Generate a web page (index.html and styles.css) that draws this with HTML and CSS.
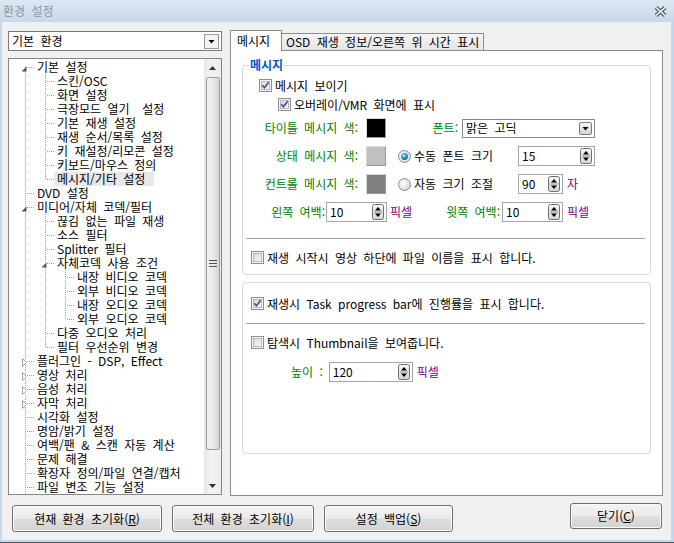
FILE: index.html
```html
<!DOCTYPE html>
<html lang="ko">

<head>
    <meta charset="UTF-8">
    <title>환경 설정</title>
    <link rel="stylesheet" href="styles.css">
</head>

<body>
    <svg class="defs" width="0" height="0">
        <defs>
            <linearGradient id="cbg" x1="0" y1="0" x2="1" y2="1">
                <stop offset="0" stop-color="#d6d8db" />
                <stop offset="1" stop-color="#fbfbfb" />
            </linearGradient>
            <radialGradient id="rbg" cx="0.4" cy="0.4" r="0.7">
                <stop offset="0" stop-color="#ffffff" />
                <stop offset="1" stop-color="#d2d2d2" />
            </radialGradient>
            <radialGradient id="rdot" cx="0.4" cy="0.35" r="0.7">
                <stop offset="0" stop-color="#c4ecff" />
                <stop offset="0.45" stop-color="#3aa0dc" />
                <stop offset="1" stop-color="#154f86" />
            </radialGradient>
            <linearGradient id="btng" x1="0" y1="0" x2="0" y2="1">
                <stop offset="0" stop-color="#f6f6f6" />
                <stop offset="1" stop-color="#d4d4d4" />
            </linearGradient>
        </defs>
    </svg>

    <div class="window">
        <div class="titlebar">
            <span class="title">환경 설정</span>
            <svg class="close" width="13" height="11" viewBox="0 0 13 11">
                <path d="M2 1.5l9 8M11 1.5l-9 8" stroke="#525c68" stroke-width="4" />
                <path d="M2 1.5l9 8M11 1.5l-9 8" stroke="#f6f7f9" stroke-width="1.6" />
            </svg>
        </div>

        <div class="client">
            <div class="main">
                <!-- 왼쪽: 분류 선택 + 트리 -->
                <div class="side">
                    <div class="combo main-combo">
                        <span class="combo-text">기본 환경</span>
                        <svg class="drop" width="15" height="15" viewBox="0 0 15 15">
                            <rect x=".5" y=".5" width="14" height="14" fill="#f4f4f4" stroke="#9a9a9a" />
                            <path d="M4.5 6h6l-3 3.5z" fill="#000" />
                        </svg>
                    </div>

                    <div class="treebox">
                        <ul class="tree">
                            <li>
                                <div class="row"><svg class="exp" viewBox="0 0 7 14"><path d="M5.5 6.5v5h-5z" fill="#555" /></svg><span>기본 설정</span></div>
                                <ul>
                                    <li><div class="row"><span>스킨/OSC</span></div></li>
                                    <li><div class="row"><span>화면 설정</span></div></li>
                                    <li><div class="row"><span>극장모드 열기&nbsp; 설정</span></div></li>
                                    <li><div class="row"><span>기본 재생 설정</span></div></li>
                                    <li><div class="row"><span>재생 순서/목록 설정</span></div></li>
                                    <li><div class="row"><span>키 재설정/리모콘 설정</span></div></li>
                                    <li><div class="row"><span>키보드/마우스 정의</span></div></li>
                                    <li><div class="row"><span class="sel">메시지/기타 설정</span></div></li>
                                </ul>
                            </li>
                            <li><div class="row"><span>DVD 설정</span></div></li>
                            <li>
                                <div class="row"><svg class="exp" viewBox="0 0 7 14"><path d="M5.5 6.5v5h-5z" fill="#555" /></svg><span>미디어/자체 코덱/필터</span></div>
                                <ul>
                                    <li><div class="row"><span>끊김 없는 파일 재생</span></div></li>
                                    <li><div class="row"><span>소스 필터</span></div></li>
                                    <li><div class="row"><span>Splitter 필터</span></div></li>
                                    <li>
                                        <div class="row"><svg class="exp" viewBox="0 0 7 14"><path d="M5.5 6.5v5h-5z" fill="#555" /></svg><span>자체코덱 사용 조건</span></div>
                                        <ul>
                                            <li><div class="row"><span>내장 비디오 코덱</span></div></li>
                                            <li><div class="row"><span>외부 비디오 코덱</span></div></li>
                                            <li><div class="row"><span>내장 오디오 코덱</span></div></li>
                                            <li><div class="row"><span>외부 오디오 코덱</span></div></li>
                                        </ul>
                                    </li>
                                    <li><div class="row"><span>다중 오디오 처리</span></div></li>
                                    <li><div class="row"><span>필터 우선순위 변경</span></div></li>
                                </ul>
                            </li>
                            <li><div class="row"><svg class="exp" viewBox="0 0 7 14"><path d="M1.5 4.5v8l4-4z" fill="#fff" stroke="#a6a6a6" /></svg><span>플러그인 - DSP, Effect</span></div></li>
                            <li><div class="row"><svg class="exp" viewBox="0 0 7 14"><path d="M1.5 4.5v8l4-4z" fill="#fff" stroke="#a6a6a6" /></svg><span>영상 처리</span></div></li>
                            <li><div class="row"><svg class="exp" viewBox="0 0 7 14"><path d="M1.5 4.5v8l4-4z" fill="#fff" stroke="#a6a6a6" /></svg><span>음성 처리</span></div></li>
                            <li><div class="row"><svg class="exp" viewBox="0 0 7 14"><path d="M1.5 4.5v8l4-4z" fill="#fff" stroke="#a6a6a6" /></svg><span>자막 처리</span></div></li>
                            <li><div class="row"><span>시각화 설정</span></div></li>
                            <li><div class="row"><span>명암/밝기 설정</span></div></li>
                            <li><div class="row"><span>여백/팬 &amp; 스캔 자동 계산</span></div></li>
                            <li><div class="row"><span>문제 해결</span></div></li>
                            <li><div class="row"><span>확장자 정의/파일 연결/캡처</span></div></li>
                            <li><div class="row"><span>파일 변조 기능 설정</span></div></li>
                        </ul>

                        <div class="vscroll">
                            <div class="sb-arrow">
                                <svg width="7" height="4" viewBox="0 0 7 4"><path d="M0 4h7L3.5 0z" fill="#333" /></svg>
                            </div>
                            <div class="sb-thumb">
                                <svg width="8" height="7" viewBox="0 0 8 7">
                                    <path d="M0 .5h8M0 3.5h8M0 6.5h8" stroke="#505050" />
                                </svg>
                            </div>
                            <div class="sb-track"></div>
                            <div class="sb-arrow">
                                <svg width="7" height="4" viewBox="0 0 7 4"><path d="M0 0h7L3.5 4z" fill="#333" /></svg>
                            </div>
                        </div>
                    </div>
                </div>

                <!-- 오른쪽: 탭 -->
                <div class="tabs">
                    <div class="tabbar">
                        <div class="tab active">메시지</div>
                        <div class="tab">OSD 재생 정보/오른쪽 위 시간 표시</div>
                        <div class="tab-fill"></div>
                    </div>

                    <div class="pane">
                        <div class="group first">
                            <div class="legend">메시지</div>

                            <div class="line check-show">
                                <svg class="cb" width="13" height="13" viewBox="0 0 13 13"><rect x=".5" y=".5" width="12" height="12" fill="#f4f4f4" stroke="#8e8f8f" /><rect x="2.5" y="2.5" width="8" height="8" fill="url(#cbg)" stroke="#b4b8bd" /><path d="M3.3 6.3l2.2 2.4 4.2-5.4" fill="none" stroke="#3e5486" stroke-width="1.7" /></svg>
                                <span class="cb-text">메시지 보이기</span>
                            </div>

                            <div class="line check-overlay">
                                <svg class="cb" width="13" height="13" viewBox="0 0 13 13"><rect x=".5" y=".5" width="12" height="12" fill="#f4f4f4" stroke="#8e8f8f" /><rect x="2.5" y="2.5" width="8" height="8" fill="url(#cbg)" stroke="#b4b8bd" /><path d="M3.3 6.3l2.2 2.4 4.2-5.4" fill="none" stroke="#3e5486" stroke-width="1.7" /></svg>
                                <span class="cb-text">오버레이/VMR 화면에 표시</span>
                            </div>

                            <div class="line color-row">
                                <span class="lbl green">타이틀 메시지 색:</span>
                                <span class="swatch black"></span>
                                <span class="font-lbl green">폰트:</span>
                                <div class="combo font-combo">
                                    <span class="combo-text">맑은 고딕</span>
                                    <svg class="drop" width="13" height="13" viewBox="0 0 13 13">
                                        <rect x=".5" y=".5" width="12" height="12" rx="1.5" fill="url(#btng)" stroke="#7a7a7a" />
                                        <path d="M3.5 5h6l-3 3.5z" fill="#000" />
                                    </svg>
                                </div>
                            </div>

                            <div class="line color-row">
                                <span class="lbl green">상태 메시지 색:</span>
                                <span class="swatch light"></span>
                                <svg class="radio" width="13" height="13" viewBox="0 0 13 13"><circle cx="6.5" cy="6.5" r="6" fill="url(#rbg)" stroke="#8e8f8f" /><circle cx="6.5" cy="6.5" r="3.4" fill="url(#rdot)" /></svg>
                                <span class="radio-text">수동 폰트 크기</span>
                                <div class="spin spin-wide">
                                    <span class="spin-text">15</span>
                                    <svg class="spin-btn" width="12" height="16" viewBox="0 0 12 16"><rect x=".5" y=".5" width="11" height="15" rx="2" fill="url(#btng)" stroke="#6e6e6e" /><path d="M2 8h8" stroke="#9a9a9a" /><path d="M3 6.5h6L6 3z M3 9.5h6L6 13z" fill="#000" /></svg>
                                </div>
                            </div>

                            <div class="line color-row">
                                <span class="lbl green">컨트롤 메시지 색:</span>
                                <span class="swatch dark"></span>
                                <svg class="radio" width="13" height="13" viewBox="0 0 13 13"><circle cx="6.5" cy="6.5" r="6" fill="url(#rbg)" stroke="#8e8f8f" /></svg>
                                <span class="radio-text">자동 크기 조절</span>
                                <div class="spin spin-small">
                                    <span class="spin-text">90</span>
                                    <svg class="spin-btn" width="12" height="16" viewBox="0 0 12 16"><rect x=".5" y=".5" width="11" height="15" rx="2" fill="url(#btng)" stroke="#6e6e6e" /><path d="M2 8h8" stroke="#9a9a9a" /><path d="M3 6.5h6L6 3z M3 9.5h6L6 13z" fill="#000" /></svg>
                                </div>
                                <span class="unit purple">자</span>
                            </div>

                            <div class="line margin-row">
                                <span class="lbl-left green">왼쪽 여백:</span>
                                <div class="spin spin-margin">
                                    <span class="spin-text">10</span>
                                    <svg class="spin-btn" width="12" height="16" viewBox="0 0 12 16"><rect x=".5" y=".5" width="11" height="15" rx="2" fill="url(#btng)" stroke="#6e6e6e" /><path d="M2 8h8" stroke="#9a9a9a" /><path d="M3 6.5h6L6 3z M3 9.5h6L6 13z" fill="#000" /></svg>
                                </div>
                                <span class="unit unit-mid purple">픽셀</span>
                                <span class="lbl-top green">윗쪽 여백:</span>
                                <div class="spin spin-margin spin-top">
                                    <span class="spin-text">10</span>
                                    <svg class="spin-btn" width="12" height="16" viewBox="0 0 12 16"><rect x=".5" y=".5" width="11" height="15" rx="2" fill="url(#btng)" stroke="#6e6e6e" /><path d="M2 8h8" stroke="#9a9a9a" /><path d="M3 6.5h6L6 3z M3 9.5h6L6 13z" fill="#000" /></svg>
                                </div>
                                <span class="unit purple">픽셀</span>
                            </div>

                            <div class="sep sep-1"></div>

                            <div class="line check-plain check-filename">
                                <svg class="cb" width="13" height="13" viewBox="0 0 13 13"><rect x=".5" y=".5" width="12" height="12" fill="#f4f4f4" stroke="#8e8f8f" /><rect x="2.5" y="2.5" width="8" height="8" fill="url(#cbg)" stroke="#b4b8bd" /></svg>
                                <span class="cb-text">재생 시작시 영상 하단에 파일 이름을 표시 합니다.</span>
                            </div>
                        </div>

                        <div class="group second">
                            <div class="line check-plain check-task">
                                <svg class="cb" width="13" height="13" viewBox="0 0 13 13"><rect x=".5" y=".5" width="12" height="12" fill="#f4f4f4" stroke="#8e8f8f" /><rect x="2.5" y="2.5" width="8" height="8" fill="url(#cbg)" stroke="#b4b8bd" /><path d="M3.3 6.3l2.2 2.4 4.2-5.4" fill="none" stroke="#3e5486" stroke-width="1.7" /></svg>
                                <span class="cb-text">재생시 Task progress bar에 진행률을 표시 합니다.</span>
                            </div>

                            <div class="sep sep-2"></div>

                            <div class="line check-plain check-thumb">
                                <svg class="cb" width="13" height="13" viewBox="0 0 13 13"><rect x=".5" y=".5" width="12" height="12" fill="#f4f4f4" stroke="#8e8f8f" /><rect x="2.5" y="2.5" width="8" height="8" fill="url(#cbg)" stroke="#b4b8bd" /></svg>
                                <span class="cb-text">탐색시 Thumbnail을 보여줍니다.</span>
                            </div>

                            <div class="line height-row">
                                <span class="green">높이 :</span>
                                <div class="spin spin-height">
                                    <span class="spin-text">120</span>
                                    <svg class="spin-btn" width="12" height="16" viewBox="0 0 12 16"><rect x=".5" y=".5" width="11" height="15" rx="2" fill="url(#btng)" stroke="#6e6e6e" /><path d="M2 8h8" stroke="#9a9a9a" /><path d="M3 6.5h6L6 3z M3 9.5h6L6 13z" fill="#000" /></svg>
                                </div>
                                <span class="unit purple">픽셀</span>
                            </div>
                        </div>
                    </div>
                </div>
            </div>

            <div class="buttons">
                <div class="btn b-reset">현재 환경 초기화(<u>R</u>)</div>
                <div class="btn b-all">전체 환경 초기화(<u>I</u>)</div>
                <div class="btn b-backup">설정 백업(<u>S</u>)</div>
                <div class="btn b-close">닫기(<u>C</u>)</div>
            </div>
        </div>
    </div>
</body>

</html>
```

FILE: styles.css
```css
* {
    padding: 0px;
    margin: 0px;

    box-sizing: border-box;
}

html,
body {
    width: 100%;
    height: 100%;
}

body {
    font-family: "Noto Sans CJK KR", "DejaVu Sans", sans-serif;
    font-size: 12px;
    line-height: 14px;
    color: #000;
    background-color: #fff;
    word-spacing: 3px;
}

.defs {
    display: block;
    width: 0;
    height: 0;
    overflow: hidden;
}

svg {
    display: block;
    flex: none;
}

/* 창 틀 */
.window {
    width: 674px;
    height: 543px;

    display: flex;
    flex-direction: column;

    background-color: #c6d7ea;
    border-bottom: 1px solid #4b5560;
}

.titlebar {
    height: 22px;
    flex: none;

    display: flex;
    align-items: center;
    justify-content: space-between;

    padding: 0 7px 0 3px;
    background: linear-gradient(#dce7f3, #c7d8eb);
}

.title {
    color: #8c97a3;
}

.client {
    flex: 1;
    margin: 0 3px 2px 2px;
    padding: 8px 8px 0 6px;

    display: flex;
    flex-direction: column;

    background-color: #f0f0f0;
}

.main {
    height: 466px;
    flex: none;

    display: flex;
    gap: 8px;
}

/* 왼쪽 */
.side {
    width: 214px;
    display: flex;
    flex-direction: column;
}

.combo {
    display: flex;
    align-items: center;
    background-color: #fff;
}

.combo-text {
    flex: 1;
    white-space: nowrap;
}

.main-combo {
    height: 20px;
    margin-top: 1px;
    padding: 0 2px 0 3px;
    border: 1px solid #7a7a7a;
}

.treebox {
    height: 437px;
    margin-top: 7px;

    display: flex;

    border: 1px solid #828790;
    background-color: #fff;
}

.tree,
.tree ul {
    list-style: none;
}

.tree {
    flex: 1;
    overflow: hidden;
    padding-top: 1px;

    background: repeating-linear-gradient(#a0a0a0 0 1px, transparent 1px 2px) 16px 8px / 1px 100% no-repeat;
}

.tree ul {
    margin-left: 20px;
    background: repeating-linear-gradient(#a0a0a0 0 1px, transparent 1px 2px) 16px 0 / 1px calc(100% - 7px) no-repeat;
}

.row {
    height: 14px;
    padding-left: 28px;

    display: flex;
    align-items: center;
    white-space: nowrap;

    background: repeating-linear-gradient(to right, #a0a0a0 0 1px, transparent 1px 2px) 18px 7px / 8px 1px no-repeat;
}

.exp {
    width: 7px;
    height: 14px;
    margin-left: -16px;
    margin-right: 9px;
}

.sel {
    margin-left: -3px;
    padding: 0 9px 0 3px;
    background-color: #e8e8e8;
}

.vscroll {
    width: 17px;
    flex: none;

    display: flex;
    flex-direction: column;

    background: linear-gradient(to right, #e6e6e6, #f3f3f3 40%, #ececec);
}

.sb-arrow {
    height: 17px;
    display: flex;
    align-items: center;
    justify-content: center;
}

.sb-thumb {
    height: 373px;
    margin: 1px 1px 0 2px;

    display: flex;
    align-items: center;
    justify-content: center;

    border: 1px solid #9b9b9b;
    border-radius: 2px;
    background: linear-gradient(to right, #f2f2f2, #e9e9e9 50%, #d4d4d4);
}

.sb-track {
    flex: 1;
}

/* 오른쪽 탭 */
.tabs {
    width: 433px;
    display: flex;
    flex-direction: column;
}

.tabbar {
    height: 21px;
    flex: none;

    display: flex;
    align-items: flex-end;
}

.tab {
    width: 202px;
    height: 18px;
    padding-left: 4px;

    display: flex;
    align-items: center;
    white-space: nowrap;

    border: 1px solid #898c95;
    border-left: 0;
    background: linear-gradient(#f5f5f5, #e5e5e5);
}

.tab.active {
    width: 52px;
    height: 21px;
    padding-left: 6px;

    border-left: 1px solid #898c95;
    border-bottom: 0;
    background: #fff;
}

.tab-fill {
    flex: 1;
    height: 1px;
    border-bottom: 1px solid #898c95;
}

.pane {
    flex: 1;
    padding: 14px 11px 0 11px;

    display: flex;
    flex-direction: column;

    border: 1px solid #898c95;
    border-top: 0;
    background-color: #fff;
}

.group {
    display: flex;
    flex-direction: column;

    border: 1px solid #d5dadf;
    border-radius: 4px;
}

.group.first {
    height: 210px;
}

.group.second {
    height: 172px;
    margin-top: 7px;
}

.legend {
    align-self: flex-start;
    height: 14px;
    margin: -8px 0 0 6px;
    padding: 0 1px;

    color: #0058d0;
    font-weight: bold;
    background-color: #fff;
}

.line {
    display: flex;
    align-items: center;
    white-space: nowrap;
}

.cb-text {
    margin-left: 3px;
}

.check-show {
    height: 13px;
    margin: 7px 0 0 16px;
}

.check-overlay {
    height: 13px;
    margin: 6px 0 0 35px;
}

.color-row {
    height: 20px;
    margin-top: 8px;
}

.color-row:nth-of-type(4) {
    margin-top: 7px;
}

.lbl {
    width: 115px;
    text-align: right;
}

.swatch {
    width: 20px;
    height: 20px;
    margin-left: 8px;

    border: 1px solid;
    border-color: #d8d8d8 #9a9a9a #9a9a9a #d8d8d8;
}

.swatch.black {
    background-color: #000;
}

.swatch.light {
    background-color: #c0c0c0;
}

.swatch.dark {
    background-color: #808080;
}

.font-lbl {
    width: 72px;
    text-align: right;
}

.font-combo {
    width: 133px;
    height: 19px;
    margin-left: 4px;
    padding: 0 2px 0 3px;

    border: 1px solid #8a8a8a;
}

.radio {
    margin-left: 12px;
}

.radio-text {
    width: 104px;
    margin-left: 3px;
}

.spin {
    height: 20px;
    padding: 0 2px 0 3px;

    display: flex;
    align-items: center;

    border: 1px solid #a3a7ad;
    background-color: #fff;
}

.spin-text {
    flex: 1;
}

.spin-wide {
    width: 77px;
}

.spin-small {
    width: 45px;
}

.spin-margin {
    width: 61px;
    margin-left: 1px;
}

.spin-top {
    margin-left: 2px;
}

.spin-height {
    width: 84px;
    margin-left: 6px;
}

.unit {
    margin-left: 4px;
}

.unit-mid {
    width: 40px;
    margin-left: 3px;
}

.margin-row {
    height: 20px;
    margin-top: 8px;
}

.lbl-left {
    width: 82px;
    text-align: right;
}

.lbl-top {
    width: 70px;
    text-align: right;
}

.sep {
    height: 1px;
    flex: none;
    margin: 0 5px 0 3px;
    background-color: #a0a0a0;
}

.sep-1 {
    margin-top: 16px;
}

.sep-2 {
    margin-top: 13px;
}

.check-plain {
    height: 13px;
    margin-left: 8px;
}

.check-filename {
    margin-top: 12px;
}

.check-task {
    margin-top: 14px;
}

.check-thumb {
    margin-top: 12px;
}

.height-row {
    height: 20px;
    margin: 13px 0 0 48px;
}

.green {
    color: #008000;
}

.purple {
    color: #800080;
}

/* 아래 버튼 */
.buttons {
    margin-top: 9px;
    padding: 0 1px 0 4px;

    display: flex;
    align-items: flex-start;
    gap: 10px;
}

.btn {
    height: 27px;

    display: flex;
    align-items: center;
    justify-content: center;
    white-space: nowrap;

    border: 1px solid #707070;
    border-radius: 3px;
    background: linear-gradient(#f3f3f3, #ebebeb 48%, #dedede 52%, #d2d2d2);
    box-shadow: inset 0 0 0 1px #fbfbfb;
}

.b-reset {
    width: 150px;
}

.b-all {
    width: 142px;
}

.b-backup {
    width: 129px;
}

.b-close {
    width: 92px;
    height: 26px;
    margin-top: -2px;
    margin-left: auto;
}
```
